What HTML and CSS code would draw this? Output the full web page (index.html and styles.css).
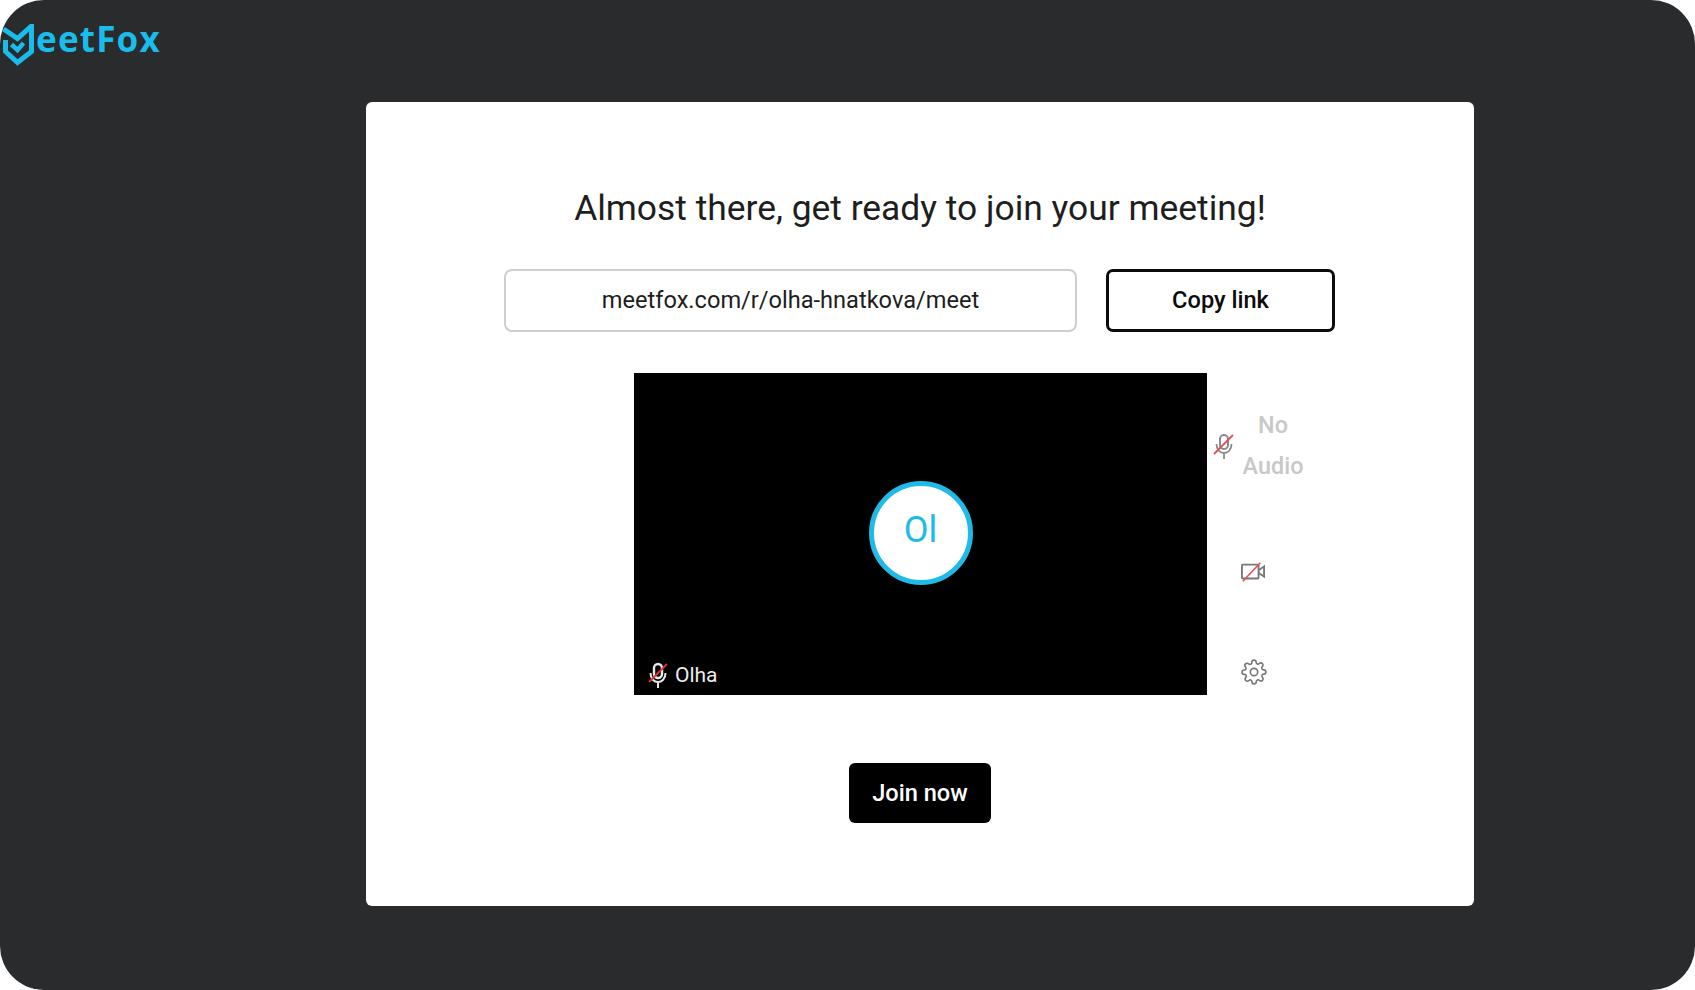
FILE: index.html
```html
<!DOCTYPE html>
<html lang="en">
<head>
    <meta charset="UTF-8">
    <meta name="viewport" content="width=device-width, initial-scale=1.0">
    <title>MeetFox | Join meeting</title>
    <link rel="stylesheet" href="styles.css">
</head>
<body>

    <div class="shell">
        <header class="top-bar">
            <div class="logo">
                <svg class="logo-mark" viewBox="0 0 34 42" width="34" height="42">
                    <path d="M1.500 5 L15.500 14.500 L29.500 2 V27.500 L15.500 38.500 L3.500 27.500 V16" fill="none" stroke="#1abcec" stroke-width="5"/>
                    <path d="M9.500 20.500 L15.500 26 L21.500 19" fill="none" stroke="#1abcec" stroke-width="4.500"/>
                </svg>
                <span class="logo-text">eetFox</span>
            </div>
        </header>

        <main class="card">
            <h1>Almost there, get ready to join your meeting!</h1>

            <div class="link-row">
                <div class="link-box">meetfox.com/r/olha-hnatkova/meet</div>
                <button class="copy-btn">Copy link</button>
            </div>

            <div class="video-row">
                <div class="video">
                    <div class="avatar">Ol</div>
                    <div class="name-tag">
                        <svg viewBox="0 0 24 28" width="24" height="28">
                            <rect x="8" y="3" width="8" height="14" rx="4" fill="none" stroke="#e8e8e8" stroke-width="2.400"/>
                            <path d="M4.500 12 C4.500 24 19.500 24 19.500 12 M12 21 V27" fill="none" stroke="#e8e8e8" stroke-width="2"/>
                            <path d="M3 21 L21 3" stroke="#d8343f" stroke-width="1.800"/>
                        </svg>
                        <span>Olha</span>
                    </div>
                </div>

                <div class="controls">
                    <div class="control audio">
                        <svg viewBox="0 0 24 28" width="24" height="28">
                            <rect x="8" y="3" width="8" height="14" rx="4" fill="none" stroke="#8a8a8a" stroke-width="2"/>
                            <path d="M4.500 12 C4.500 24 19.500 24 19.500 12 M12 21 V27" fill="none" stroke="#8a8a8a" stroke-width="1.800"/>
                            <path d="M2 22 L21 3" stroke="#e2505a" stroke-width="1.800"/>
                        </svg>
                        <span class="audio-label">No Audio</span>
                    </div>
                    <div class="control icon-only">
                        <svg viewBox="0 0 26 22" width="24" height="22">
                            <rect x="1" y="3" width="18" height="15" rx="1" fill="none" stroke="#777" stroke-width="2"/>
                            <path d="M19 9 L25 5 V16 L19 12" fill="none" stroke="#777" stroke-width="2"/>
                            <path d="M2 21 L21 1" stroke="#e2505a" stroke-width="1.800"/>
                        </svg>
                    </div>
                    <div class="control icon-only">
                        <svg viewBox="0 0 24 24" width="26" height="26" fill="none" stroke="#777" stroke-width="1.500" stroke-linejoin="round">
                            <circle cx="12" cy="12" r="3.400"/>
                            <path d="M19.400 15a1.650 1.650 0 0 0 .33 1.820l.06.06a2 2 0 1 1-2.830 2.830l-.06-.06a1.650 1.650 0 0 0-2.800 1.170V21a2 2 0 0 1-4 0v-.09a1.650 1.650 0 0 0-2.820-1.110l-.06.06a2 2 0 1 1-2.830-2.830l.06-.06a1.650 1.650 0 0 0-1.170-2.800H3a2 2 0 0 1 0-4h.09a1.650 1.650 0 0 0 1.110-2.820l-.06-.06a2 2 0 1 1 2.830-2.830l.06.06a1.650 1.650 0 0 0 1.820.33H9a1.650 1.650 0 0 0 1-1.510V3a2 2 0 0 1 4 0v.09a1.650 1.650 0 0 0 2.800 1.170l.06-.06a2 2 0 1 1 2.830 2.830l-.06.06a1.650 1.650 0 0 0-.33 1.820V9a1.650 1.650 0 0 0 1.510 1H21a2 2 0 0 1 0 4h-.09a1.650 1.650 0 0 0-1.510 1z"/>
                        </svg>
                    </div>
                </div>
            </div>

            <button class="join-btn">Join now</button>
        </main>
    </div>

</body>
</html>
```

FILE: styles.css
```css
* { margin: 0; padding: 0; box-sizing: border-box; font-family: Roboto, 'Liberation Sans', sans-serif; }
body { background: #fff; width: 1695px; height: 990px; overflow: hidden; }
.shell { width: 1695px; height: 990px; background: #292b2d; border-radius: 44px; display: flex; flex-direction: column; }

.top-bar { width: 100%; height: 102px; padding: 21px 0 0 2px; }
.logo { display: flex; align-items: flex-start; }
.logo-mark { display: block; margin-top: 3px; }
.logo-text { font-family: 'Open Sans', sans-serif; font-size: 35px; line-height: 36px; font-weight: 700; color: #1abcec; letter-spacing: 1.2px; }

.card { width: 1108px; height: 804px; margin-left: 366px; background: #fff; border-radius: 6px; display: flex; flex-direction: column; align-items: center; padding-top: 85px; }
h1 { font-size: 35.4px; line-height: 42px; font-weight: 400; color: #1e1e1e; }

.link-row { display: flex; gap: 29px; margin-top: 40px; margin-left: -1px; }
.link-box { width: 573px; height: 63px; padding-bottom: 2px; border: 2px solid #cfcfcf; border-radius: 8px; display: flex; justify-content: center; align-items: center; font-size: 23.6px; color: #1d1d1d; }
.copy-btn { width: 229px; height: 63px; padding-bottom: 2px; background: #fff; border: 3px solid #0b0b0b; border-radius: 7px; font-size: 23.6px; font-weight: 500; color: #0b0b0b; }

.video-row { display: grid; grid-template-columns: 268px 573px 267px; margin-top: 41px; width: 100%; }
.video { grid-column: 2; height: 322px; background: #000; position: relative; display: flex; justify-content: center; align-items: center; }
.avatar { width: 104px; height: 104px; margin-bottom: 2px; border-radius: 50%; background: #fff; border: 5px solid #1fbbe8; color: #1fbbe8; font-size: 36px; display: flex; justify-content: center; align-items: center; padding-bottom: 6px; }
.name-tag { position: absolute; left: 12px; bottom: 6px; display: flex; align-items: center; gap: 5px; color: #ececec; font-size: 21px; }

.controls { display: flex; flex-direction: column; padding: 31px 0 0 5px; }
.control { display: flex; align-items: center; }
.audio { height: 84px; gap: 4px; }
.audio-label { width: 66px; text-align: center; font-size: 23.4px; font-weight: 500; line-height: 41px; color: #c8c8c8; }
.icon-only { padding-left: 29px; height: 26px; }
.icon-only:nth-child(2) { margin-top: 71px; }
.icon-only:nth-child(3) { margin-top: 74px; }

.join-btn { width: 142px; height: 60px; margin-top: 68px; padding-bottom: 1px; background: #000; color: #fff; border: none; border-radius: 6px; font-size: 23.6px; font-weight: 500; }
```
